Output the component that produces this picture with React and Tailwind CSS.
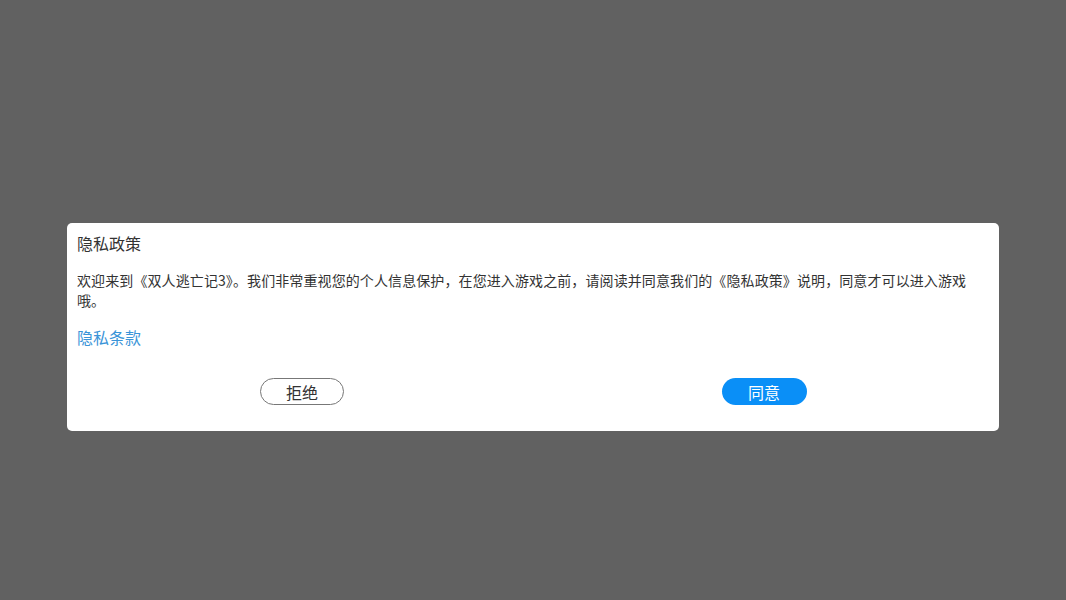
import React from 'react'

export default function App() {
  return (
    <div
      className="w-[1066px] h-[600px] bg-[#616161] pt-[223px] px-[67px]"
      style={{ fontFamily: '"Noto Sans CJK SC", "Noto Sans", sans-serif' }}
    >
      <div className="bg-white rounded-[5px] px-[10px] pt-[9px] pb-[26px] text-[#333]">
        <div className="text-[16px] leading-[22px]">隐私政策</div>
        <p className="mt-[16px] text-[14px] leading-[20px] tracking-[0.1px]">
          欢迎来到《双人逃亡记3》。我们非常重视您的个人信息保护，在您进入游戏之前，请阅读并同意我们的《隐私政策》说明，同意才可以进入游戏哦。
        </p>
        <div className="mt-[16px] text-[16px] leading-[22px] text-[#3a94d8]">隐私条款</div>
        <div className="mt-[30px] flex">
          <div className="flex-1 flex justify-center pr-[6px]">
            <button className="w-[84px] h-[27px] rounded-full border border-[#777] text-[16px] leading-none text-[#333]">
              拒绝
            </button>
          </div>
          <div className="flex-1 flex justify-center pl-[6px]">
            <button className="w-[85px] h-[27px] rounded-full bg-[#0a8ff7] text-[16px] leading-none text-white">
              同意
            </button>
          </div>
        </div>
      </div>
    </div>
  )
}
